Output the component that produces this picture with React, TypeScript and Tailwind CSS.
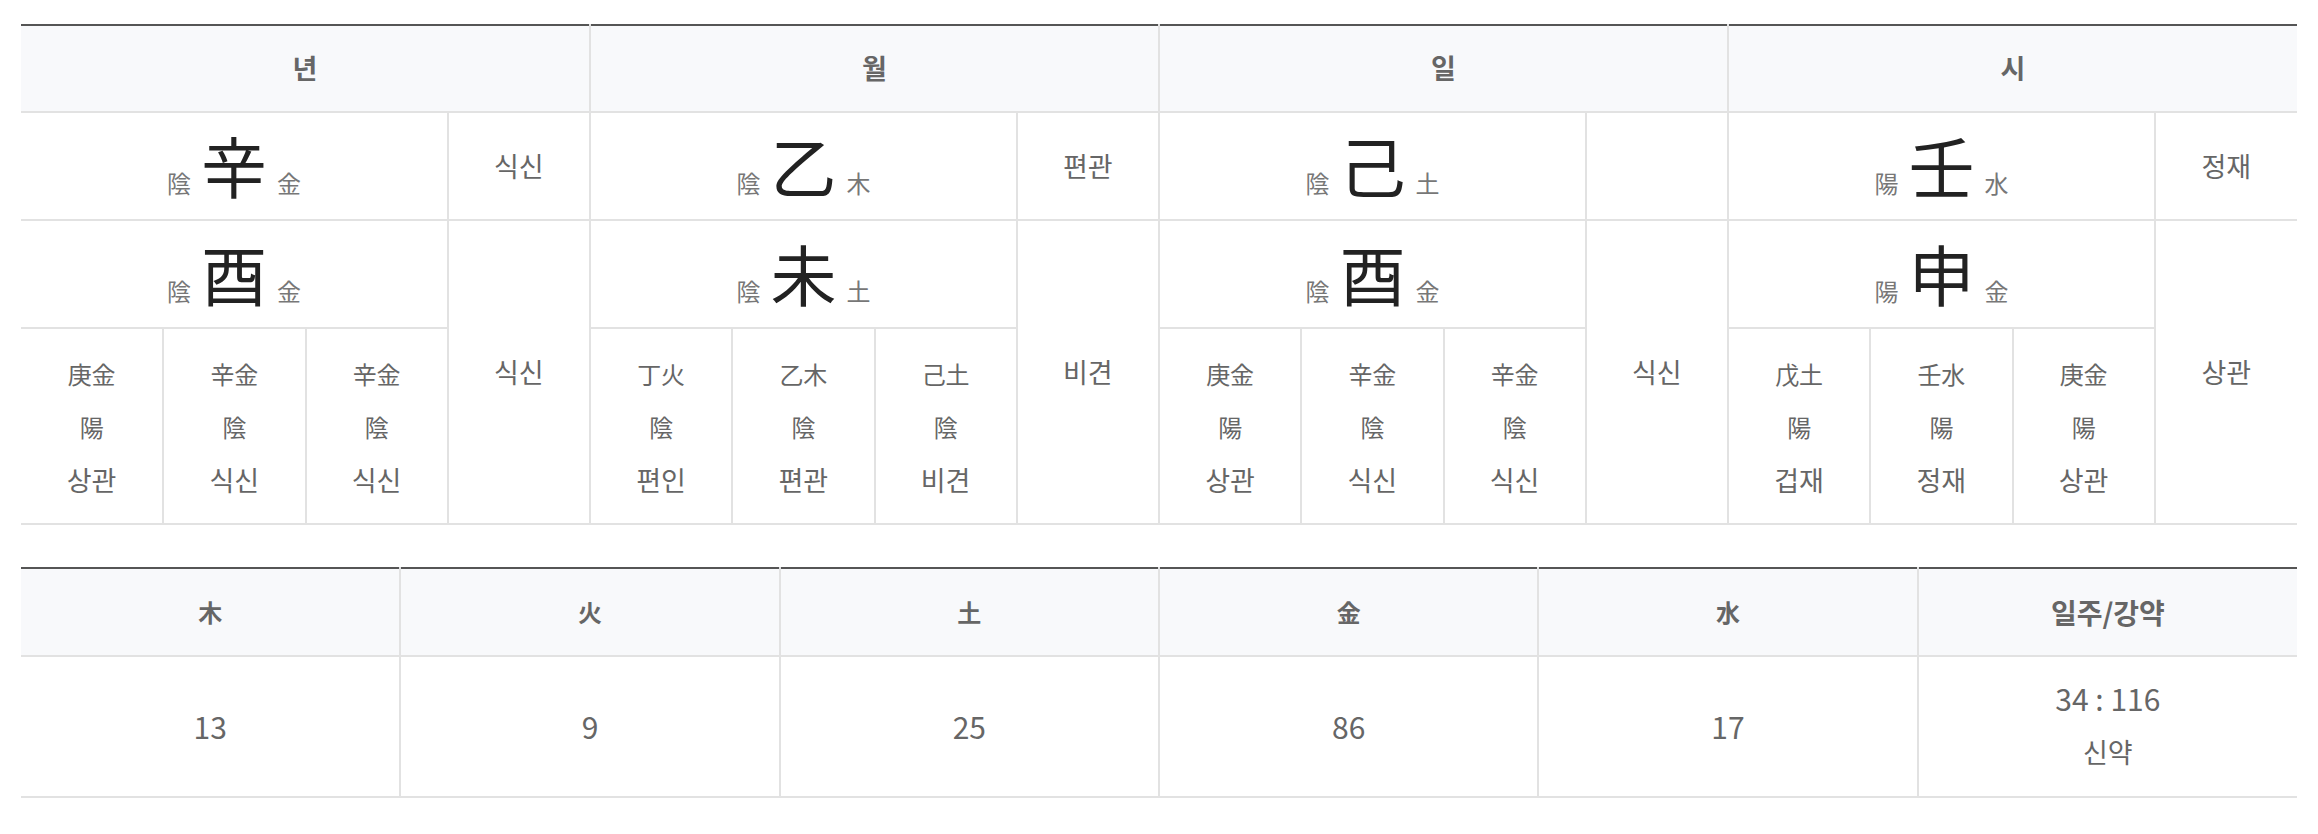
import React from "react";

type Pillar = {
  title: string;
  stem: { yy: string; ch: string; el: string; god: string };
  branch: { yy: string; ch: string; el: string; god: string };
  hidden: { stem: string; yy: string; god: string }[];
};

const pillars: Pillar[] = [
  {
    title: "년",
    stem: { yy: "陰", ch: "辛", el: "金", god: "식신" },
    branch: { yy: "陰", ch: "酉", el: "金", god: "식신" },
    hidden: [
      { stem: "庚金", yy: "陽", god: "상관" },
      { stem: "辛金", yy: "陰", god: "식신" },
      { stem: "辛金", yy: "陰", god: "식신" },
    ],
  },
  {
    title: "월",
    stem: { yy: "陰", ch: "乙", el: "木", god: "편관" },
    branch: { yy: "陰", ch: "未", el: "土", god: "비견" },
    hidden: [
      { stem: "丁火", yy: "陰", god: "편인" },
      { stem: "乙木", yy: "陰", god: "편관" },
      { stem: "己土", yy: "陰", god: "비견" },
    ],
  },
  {
    title: "일",
    stem: { yy: "陰", ch: "己", el: "土", god: "" },
    branch: { yy: "陰", ch: "酉", el: "金", god: "식신" },
    hidden: [
      { stem: "庚金", yy: "陽", god: "상관" },
      { stem: "辛金", yy: "陰", god: "식신" },
      { stem: "辛金", yy: "陰", god: "식신" },
    ],
  },
  {
    title: "시",
    stem: { yy: "陽", ch: "壬", el: "水", god: "정재" },
    branch: { yy: "陽", ch: "申", el: "金", god: "상관" },
    hidden: [
      { stem: "戊土", yy: "陽", god: "겁재" },
      { stem: "壬水", yy: "陽", god: "정재" },
      { stem: "庚金", yy: "陽", god: "상관" },
    ],
  },
];

const elements = [
  { name: "木", value: "13" },
  { name: "火", value: "9" },
  { name: "土", value: "25" },
  { name: "金", value: "86" },
  { name: "水", value: "17" },
];

const cell = "border-2 border-[#e2e2e2] first:border-l-0 last:border-r-0 text-center align-middle p-0";

const Char = ({ yy, ch, el }: { yy: string; ch: string; el: string }) => (
  <div className="inline-flex items-baseline gap-[10px]">
    <span className="text-[24px] text-[#777]">{yy}</span>
    <span className="text-[66px] leading-none text-[#222]">{ch}</span>
    <span className="text-[24px] text-[#777]">{el}</span>
  </div>
);

export default function App() {
  return (
    <div
      className="min-h-screen bg-white px-[21px] pt-6 text-[#666]"
      style={{ fontFamily: '"Noto Sans CJK KR", "Noto Sans", sans-serif' }}
    >
      <table className="w-full table-fixed border-collapse">
        <colgroup>
          {Array.from({ length: 16 }).map((_, i) => (
            <col key={i} />
          ))}
        </colgroup>
        <thead>
          <tr className="h-[87px] border-t-2 border-t-[#555] bg-[#f8f9fb]">
            {pillars.map((p) => (
              <th key={p.title} colSpan={4} className={cell + " border-t-[#555] text-[27px] font-bold text-[#666]"}>
                {p.title}
              </th>
            ))}
          </tr>
        </thead>
        <tbody>
          <tr className="h-[108px]">
            {pillars.map((p) => (
              <React.Fragment key={p.title}>
                <td colSpan={3} className={cell}>
                  <Char {...p.stem} />
                </td>
                <td className={cell + " text-[27px]"}>{p.stem.god}</td>
              </React.Fragment>
            ))}
          </tr>
          <tr className="h-[108px]">
            {pillars.map((p) => (
              <React.Fragment key={p.title}>
                <td colSpan={3} className={cell}>
                  <Char {...p.branch} />
                </td>
                <td rowSpan={2} className={cell + " text-[27px]"}>
                  {p.branch.god}
                </td>
              </React.Fragment>
            ))}
          </tr>
          <tr className="h-[196px]">
            {pillars.map((p) =>
              p.hidden.map((h, i) => (
                <td key={p.title + i} className={cell + " border-l-2"}>
                  <div className="flex flex-col items-center leading-[53px]">
                    <span className="text-[24px]">{h.stem}</span>
                    <span className="text-[24px]">{h.yy}</span>
                    <span className="text-[27px]">{h.god}</span>
                  </div>
                </td>
              ))
            )}
          </tr>
        </tbody>
      </table>

      <table className="mt-[42px] w-full table-fixed border-collapse">
        <thead>
          <tr className="h-[88px] border-t-2 border-t-[#555] bg-[#f8f9fb]">
            {elements.map((e) => (
              <th key={e.name} className={cell + " border-t-[#555] text-[24px] font-bold text-[#666]"}>
                {e.name}
              </th>
            ))}
            <th className={cell + " border-t-[#555] text-[28px] font-bold text-[#666]"}>일주/강약</th>
          </tr>
        </thead>
        <tbody>
          <tr className="h-[141px]">
            {elements.map((e) => (
              <td key={e.name} className={cell + " text-[30px]"}>
                {e.value}
              </td>
            ))}
            <td className={cell}>
              <div className="flex flex-col items-center leading-[53px]">
                <span className="-mt-1 text-[30px]">34 : 116</span>
                <span className="text-[27px]">신약</span>
              </div>
            </td>
          </tr>
        </tbody>
      </table>
    </div>
  );
}
